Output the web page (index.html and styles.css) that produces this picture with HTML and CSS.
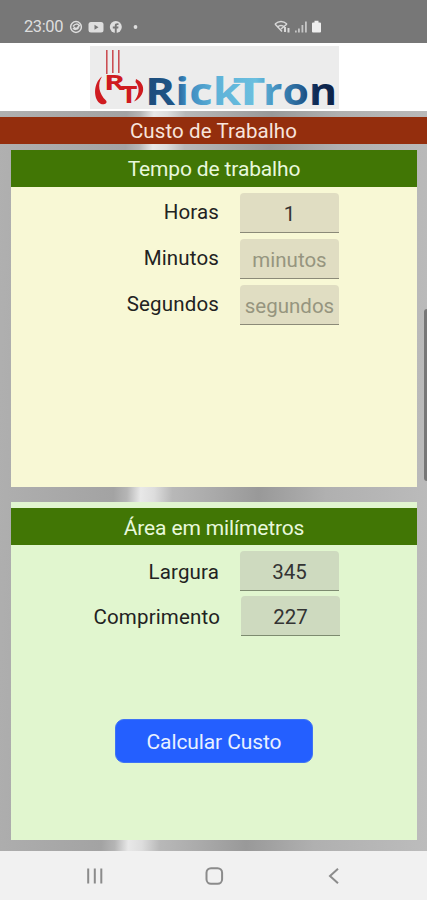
FILE: index.html
```
<!DOCTYPE html>
<html lang="pt-BR">
<head>
    <meta charset="UTF-8">
    <title>RickTron - Custo de Trabalho</title>
    <link rel="stylesheet" href="styles.css">
</head>
<body>

<div class="status">
    <span class="clock">23:00</span>
    <svg class="notifications" width="72" height="16" viewBox="0 0 72 16">
        <g fill="none" stroke="#dedede" stroke-width="1.5">
            <circle cx="7" cy="8" r="5.4"/>
            <path d="M4 7.500c2-3 5-3 6-1M10 8c-2 3-5 3-6 1M5 8l2 2 4-4"/>
        </g>
        <rect x="19.500" y="3" width="15" height="10.500" rx="2.500" fill="#dedede"/>
        <path d="M25.500 5.700v5l4-2.500z" fill="#777"/>
        <circle cx="46.800" cy="8" r="6" fill="#dedede"/>
        <path d="M45.800 14V9.500h-2V7.600h2V6.500c0-1.800 1-2.600 3.700-2.300V6c-1.300-.1-1.800 0-1.800.8v.8h1.800l-.3 1.900h-1.500V14z" fill="#777"/>
        <circle cx="66.500" cy="8" r="1.900" fill="#dedede"/>
    </svg>
    <svg class="signal" width="48" height="16" viewBox="0 0 48 16">
        <g fill="none" stroke="#d8d8d8" stroke-width="1.500">
            <path d="M1 5q6-5 12 0M3.500 8q3.500-3 7 0"/>
            <path d="M1 5l7 7.500M13 5L7 10"/>
            <path d="M11 8v5M14.500 9v4.500" stroke-width="2"/>
        </g>
        <path d="M21 11.500h1.700V13.500H21zM24 9.500h1.800v4H24zM27.500 6h1.800v7.500h-1.800zM31 2.500h1.800v11H31z" fill="#c6c6c6"/>
        <path d="M38 4.500q0-1 1-1h1.500V1.800h4v1.700H46q1 0 1 1v8q0 1-1 1h-7q-1 0-1-1z" fill="#eee"/>
    </svg>
</div>

<div class="brand">
    <svg class="logo" width="249" height="63" viewBox="0 0 249 63">
        <defs>
            <linearGradient id="steel" gradientUnits="userSpaceOnUse" x1="58" y1="0" x2="244" y2="0">
                <stop offset="0" stop-color="#1d4d7c"/>
                <stop offset=".14" stop-color="#1f5587"/>
                <stop offset=".2" stop-color="#3a86bd"/>
                <stop offset=".36" stop-color="#5eb2d8"/>
                <stop offset=".58" stop-color="#6bbfdf"/>
                <stop offset=".7" stop-color="#408cbd"/>
                <stop offset=".83" stop-color="#245d91"/>
                <stop offset=".9" stop-color="#102b56"/>
                <stop offset="1" stop-color="#0d2247"/>
            </linearGradient>
        </defs>
        <path d="M16.800 4v24M22.800 4v23M28.800 4v23" stroke="#c9474c" stroke-width="1.500"/>
        <path d="M12 30.500C3 37 3 54 11 58c3 1 7-.5 5-3.500C9 48 7 38 12 30.500z" fill="#cf1b20"/>
        <path d="M46 33C51 35 54 40 53 45 52 50 48 54 44 55.500 48.500 50 51 42 45.500 36z" fill="#cf1b20"/>
        <text class="mark" x="14" y="44" textLength="21" lengthAdjust="spacingAndGlyphs" font-size="21">R</text>
        <text class="mark" x="30.500" y="57" textLength="17" lengthAdjust="spacingAndGlyphs" font-size="23">T</text>
        <g class="wordmark" fill="url(#steel)">
            <text x="55" y="58.500" textLength="96" lengthAdjust="spacingAndGlyphs">Rick</text>
            <text x="142.500" y="58.500" textLength="33" lengthAdjust="spacingAndGlyphs">T</text>
            <text x="173" y="58.500" textLength="74" lengthAdjust="spacingAndGlyphs">ron</text>
        </g>
    </svg>
</div>

<div class="content">
    <h1>Custo de Trabalho</h1>

    <div class="panel time">
        <h2>Tempo de trabalho</h2>
        <div class="row">
            <label for="horas">Horas</label>
            <input id="horas" type="text" value="1">
        </div>
        <div class="row">
            <label for="minutos">Minutos</label>
            <input id="minutos" type="text" placeholder="minutos">
        </div>
        <div class="row">
            <label for="segundos">Segundos</label>
            <input id="segundos" type="text" placeholder="segundos">
        </div>
    </div>

    <div class="panel area">
        <h2>Área em milímetros</h2>
        <div class="row">
            <label for="largura">Largura</label>
            <input id="largura" type="text" value="345">
        </div>
        <div class="row wide">
            <label for="comprimento">Comprimento</label>
            <input id="comprimento" type="text" value="227">
        </div>
        <button class="calc" type="button">Calcular Custo</button>
    </div>

    <div class="scrollbar"></div>
</div>

<div class="navbar">
    <svg width="20" height="20" viewBox="0 0 20 20"><path d="M3.200 2.500v15M9.800 2.500v15M16.300 2.500v15"/></svg>
    <svg width="20" height="20" viewBox="0 0 20 20"><rect x="1.500" y="2.200" width="15.600" height="15.600" rx="4.500"/></svg>
    <svg width="20" height="20" viewBox="0 0 20 20"><path d="M14 2.700L6 10l8 7.300"/></svg>
</div>

</body>
</html>
```

FILE: styles.css
```
* { box-sizing: border-box; }
body { margin: 0; width: 427px; height: 900px; display: flex; flex-direction: column; overflow: hidden; font-family: Roboto, "Liberation Sans", sans-serif; background-color: #f1f1f1; }

.status { height: 43px; padding: 10px 0 0 24px; display: flex; align-items: center; background-color: #777; color: #dedede; }
.clock { width: 45px; font-size: 16.5px; line-height: 18px; letter-spacing: -0.4px; }
.signal { margin-left: 133px; }

.brand { height: 68px; padding-top: 3px; display: flex; justify-content: center; background-color: #fff; }
.logo { margin-left: 2px; overflow: visible; background-color: #ececec; }
.mark { font-family: "Open Sans", sans-serif; font-weight: bold; fill: #cf1b20; }
.wordmark { font-family: "Open Sans", sans-serif; font-weight: bold; font-size: 38px; }

/* brushed metal backdrop */
.content { position: relative; height: 740px; padding-top: 6px; background: linear-gradient(92deg, #b0b0b0 0%, #a3a3a3 28%, #b5b5b5 31%, #e8e8e8 34%, #ddd 37%, #b8b8b8 41%, #aaa 50%, #999 60%, #b0b0b0 75%, #bcbcbc 100%); }

h1, h2 { margin: 0; font-weight: normal; text-align: center; }
h1 { height: 27px; line-height: 29px; font-size: 20.5px; letter-spacing: 0.1px; color: #f8e4dc; background-color: #942e0d; }
h2 { height: 37px; margin-bottom: 6px; padding-top: 1px; line-height: 37px; font-size: 21px; letter-spacing: -0.15px; color: #e8f8dc; background-color: #417605; }

.panel { margin: 0 10px 0 11px; }
.time { height: 337px; margin-top: 6px; background-color: #f8f8d5; }
.area { height: 338px; margin-top: 15px; padding-top: 6px; background-color: #e1f6cf; }
.area h2 { padding-top: 2px; }

.row { height: 39px; margin-bottom: 7px; display: flex; gap: 21px; }
.row label { width: 208px; text-align: right; line-height: 39px; font-size: 20.5px; letter-spacing: 0.15px; color: #222; }
.row input { width: 99px; height: 40px; padding: 2px 4px 0; border: 0; border-bottom: 1px solid #8b8a78; border-radius: 4px 4px 0 0; font: 20.5px Roboto, sans-serif; text-align: center; color: #333; background-color: #e0ddc2; }
.row input::placeholder { color: #96957f; opacity: 1; }
.area .row { margin-bottom: 6px; }
.area .row label { padding-top: 2px; }
.area .row input { border-color: #7d8b70; background-color: #cedabf; }
.area .wide { padding-left: 1px; }

.calc { display: block; width: 198px; height: 44px; margin: 84px 0 0 104px; padding: 2px 0 0; border: 1px solid #3d73f5; border-radius: 9px; font: 21px Roboto, sans-serif; letter-spacing: -0.1px; color: #e8f0ff; background-color: #245fff; }

.scrollbar { position: absolute; top: 198px; right: 0; width: 3px; height: 172px; border-radius: 3px 0 0 3px; background-color: #777; }

.navbar { height: 49px; padding: 1px 83px 0 85px; display: flex; align-items: center; justify-content: space-between; background-color: #f1f1f1; }
.navbar svg { fill: none; stroke: #8b8b8b; stroke-width: 2; }
```
